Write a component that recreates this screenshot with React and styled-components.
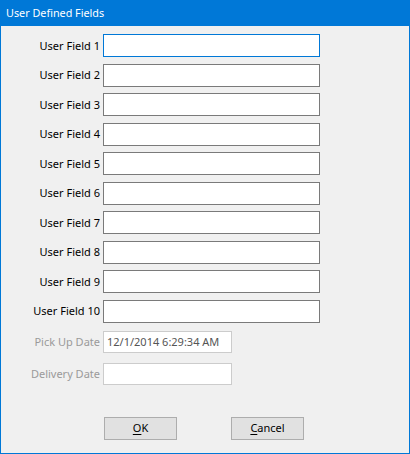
import React from "react";
import styled, { createGlobalStyle } from "styled-components";

const Global = createGlobalStyle`
  html, body {
    margin: 0;
    padding: 0;
    background: #f0f0f0;
  }
  * {
    box-sizing: border-box;
  }
`;

const Window = styled.div`
  width: 410px;
  height: 454px;
  display: flex;
  flex-direction: column;
  border: 1px solid #0078d7;
  border-top: none;
  background: #f0f0f0;
  font-family: "Noto Sans", "Liberation Sans", Arial, sans-serif;
  font-size: 11px;
  color: #000;
`;

const TitleBar = styled.div`
  height: 26px;
  margin: 0 -1px;
  padding: 0 6px 1px;
  display: flex;
  align-items: center;
  background: #0078d7;
  color: #fff;
  font-size: 10.8px;
`;

const Form = styled.div`
  display: grid;
  grid-template-columns: 99px 217px;
  grid-auto-rows: 23px;
  column-gap: 3px;
  row-gap: 6.5px;
  align-items: center;
  padding-top: 8px;
`;

const Dates = styled(Form)`
  grid-template-columns: 99px 129px;
  grid-auto-rows: 22px;
  row-gap: 10px;
  padding-top: 8px;
`;

const Label = styled.label`
  text-align: right;
  white-space: nowrap;
  padding-bottom: 1px;
  color: ${(p) => (p.disabled ? "#9a9a9a" : "#000")};
`;

const Input = styled.div`
  height: 100%;
  border: 1px solid ${(p) => (p.focused ? "#0078d7" : p.disabled ? "#cccccc" : "#7a7a7a")};
  background: #fff;
  color: #555;
  padding: 0 0 1px 3px;
  display: flex;
  align-items: center;
  white-space: nowrap;
  overflow: hidden;
`;

const Buttons = styled.div`
  display: flex;
  gap: 54px;
  padding-left: 103px;
  margin-top: 32px;
`;

const Button = styled.div`
  width: 73px;
  height: 23px;
  border: 1px solid #adadad;
  background: #e1e1e1;
  display: flex;
  align-items: center;
  justify-content: center;
  padding-bottom: 1px;

  u {
    text-decoration-thickness: 1px;
    text-underline-offset: 2px;
  }
`;

const fields = Array.from({ length: 10 }, (_, i) => `User Field ${i + 1}`);

export default function App() {
  return (
    <>
      <Global />
      <Window>
        <TitleBar>User Defined Fields</TitleBar>
        <Form>
          {fields.map((f, i) => (
            <React.Fragment key={f}>
              <Label>{f}</Label>
              <Input focused={i === 0} />
            </React.Fragment>
          ))}
        </Form>
        <Dates>
          <Label disabled>Pick Up Date</Label>
          <Input disabled>12/1/2014 6:29:34 AM</Input>
          <Label disabled>Delivery Date</Label>
          <Input disabled />
        </Dates>
        <Buttons>
          <Button>
            <span><u>O</u>K</span>
          </Button>
          <Button>
            <span><u>C</u>ancel</span>
          </Button>
        </Buttons>
      </Window>
    </>
  );
}
